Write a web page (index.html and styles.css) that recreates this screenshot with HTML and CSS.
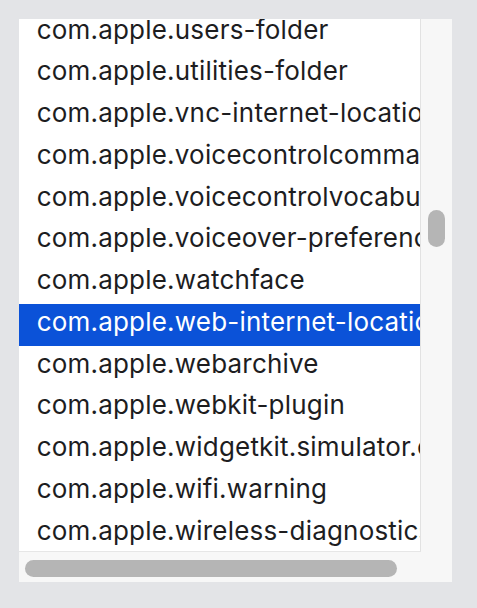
FILE: index.html
```html
<!DOCTYPE html>
<html>
<head>
<meta charset="utf-8">
<link rel="stylesheet" href="styles.css">
</head>
<body>
<div class="panel">
  <div class="content">
    <div class="list">
      <div class="rows">
        <div class="row">com.apple.users-folder</div>
        <div class="row">com.apple.utilities-folder</div>
        <div class="row">com.apple.vnc-internet-location</div>
        <div class="row">com.apple.voicecontrolcommands</div>
        <div class="row">com.apple.voicecontrolvocabulary</div>
        <div class="row">com.apple.voiceover-preferences</div>
        <div class="row">com.apple.watchface</div>
        <div class="row selected">com.apple.web-internet-location</div>
        <div class="row">com.apple.webarchive</div>
        <div class="row">com.apple.webkit-plugin</div>
        <div class="row">com.apple.widgetkit.simulator.environment</div>
        <div class="row">com.apple.wifi.warning</div>
        <div class="row">com.apple.wireless-diagnostics</div>
        <div class="row">com.apple.xcode.archive</div>
      </div>
    </div>
    <div class="vscroll"><div class="vthumb"></div></div>
  </div>
  <div class="hscroll"><div class="hthumb"></div></div>
</div>
</body>
</html>
```

FILE: styles.css
```css
html, body {
  margin: 0;
  padding: 0;
  background: #e3e4e7;
  width: 477px;
  height: 608px;
  overflow: hidden;
}

.panel {
  margin: 19px 0 0 19px;
  width: 433px;
  height: 563px;
  display: flex;
  flex-direction: column;
  background: #f6f6f6;
}

.content {
  display: flex;
  height: 533px;
}

.list {
  width: 402px;
  height: 533px;
  overflow: hidden;
  background: #ffffff;
  border-right: 1px solid #e2e2e2;
  border-bottom: 1px solid #e6e6e6;
  box-sizing: border-box;
}

.rows {
  margin-top: -7.5px;
}

.row {
  height: 41.75px;
  box-sizing: border-box;
  padding-left: 17.7px;
  padding-bottom: 5.15px;
  line-height: 36.6px;
  font-family: Inter, "Liberation Sans", sans-serif;
  font-size: 26px;
  letter-spacing: 0.2px;
  color: #1d1d1f;
  white-space: nowrap;
  overflow: hidden;
}

.row.selected {
  background: #0b52d8;
  color: #ffffff;
}

.vscroll {
  width: 31px;
  padding-top: 191px;
  box-sizing: border-box;
  background: #f7f7f7;
}

.vthumb {
  margin-left: 6.7px;
  width: 17px;
  height: 37px;
  border-radius: 8.5px;
  background: #b5b5b5;
}

.hscroll {
  height: 30px;
  padding-top: 8px;
  padding-left: 6px;
  box-sizing: border-box;
  background: #f7f7f7;
}

.hthumb {
  width: 372px;
  height: 17px;
  border-radius: 8.5px;
  background: #b5b5b5;
}
```
